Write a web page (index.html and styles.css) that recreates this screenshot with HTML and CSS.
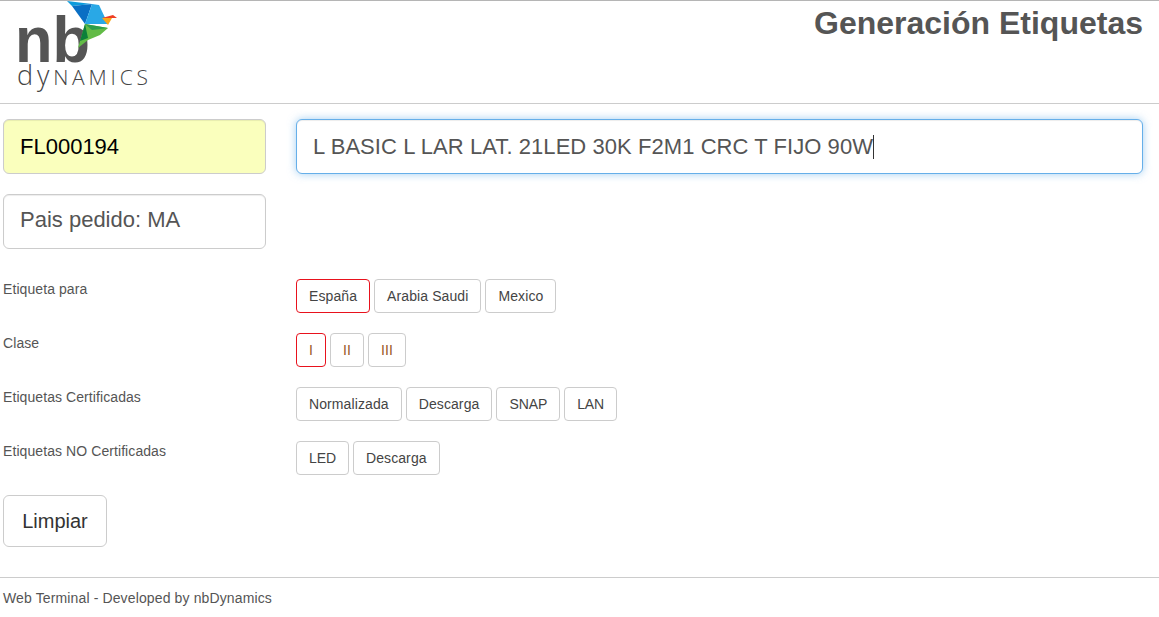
FILE: index.html
```html
<!DOCTYPE html>
<html lang="en">

<head>
  <meta charset="UTF-8" />
  <title>Generación Etiquetas</title>
  <link rel="stylesheet" href="styles.css">
</head>

<body>
  <header class="top">
    <svg class="logo" width="160" height="102" viewBox="0 1 160 102">
      <text class="logo-nb" x="15" y="62" textLength="75" lengthAdjust="spacingAndGlyphs">nb</text>
      <text class="logo-dyn" x="17" y="85" textLength="131"><tspan class="logo-dy">dy</tspan>NAMICS</text>
      <polygon points="67,1 92,4 72,6" fill="#0d9bdc" />
      <polygon points="72,6 92,4 85,24" fill="#0a6fc4" />
      <polygon points="92,4 99,5 108,24 85,24" fill="#29a8e6" />
      <polygon points="85,24 108,28 100,35 88,40 78,48" fill="#62bb46" />
      <polygon points="85,24 108,28 92,30" fill="#2f9e4a" />
      <polygon points="85,24 88,38 80,41 78,48" fill="#0b7f3a" />
      <polygon points="102,18 112,18 108,25" fill="#f9a51a" />
      <polygon points="102,18 113,15 117,18" fill="#ee3e23" />
    </svg>
    <h1 class="title">Generación Etiquetas</h1>
  </header>

  <main class="content">
    <div class="row-inputs">
      <input class="field field-code" type="text" value="FL000194" />
      <div class="field field-desc">L BASIC L LAR LAT. 21LED 30K F2M1 CRC T FIJO 90W<span class="caret"></span></div>
    </div>
    <div class="row-inputs">
      <input class="field field-pais" type="text" value="Pais pedido: MA" />
    </div>

    <div class="options">
      <div class="opt-label">Etiqueta para</div>
      <div class="opt-btns">
        <a class="btn on" href="#">España</a>
        <a class="btn" href="#">Arabia Saudi</a>
        <a class="btn" href="#">Mexico</a>
      </div>

      <div class="opt-label">Clase</div>
      <div class="opt-btns">
        <a class="btn warm on" href="#">I</a>
        <a class="btn warm" href="#">II</a>
        <a class="btn warm" href="#">III</a>
      </div>

      <div class="opt-label">Etiquetas Certificadas</div>
      <div class="opt-btns">
        <a class="btn" href="#">Normalizada</a>
        <a class="btn" href="#">Descarga</a>
        <a class="btn caps" href="#">SNAP</a>
        <a class="btn caps" href="#">LAN</a>
      </div>

      <div class="opt-label">Etiquetas NO Certificadas</div>
      <div class="opt-btns">
        <a class="btn caps" href="#">LED</a>
        <a class="btn" href="#">Descarga</a>
      </div>
    </div>

    <a class="btn btn-lg" href="#">Limpiar</a>
  </main>

  <footer class="bottom">Web Terminal - Developed by nbDynamics</footer>
</body>

</html>
```

FILE: styles.css
```css
html, body, div, h1 {
  padding: 0;
  margin: 0;
}
body {
  font-family: "Liberation Sans", Arial, sans-serif;
  font-size: 14px;
  color: #555;
  background-color: #fff;
  border-top: 1px solid #b5b5b5;
}
a {
  color: inherit;
  text-decoration: none;
}

.top {
  display: flex;
  justify-content: space-between;
  height: 102px;
  padding-right: 16px;
  border-bottom: 1px solid #ccc;
}
.logo {
  display: block;
}
.logo-nb {
  font-size: 65px;
  font-weight: bold;
  fill: #555;
}
.logo-dyn {
  font-family: "Open Sans", sans-serif;
  font-size: 21px;
  font-weight: 300;
  fill: #444;
}
.logo-dy {
  font-size: 27px;
}
.title {
  font-size: 32px;
  line-height: 34px;
  font-weight: bold;
  color: #555;
  padding-top: 5px;
}

.content {
  padding: 15px 16px 30px 3px;
  border-bottom: 1px solid #ccc;
}
.row-inputs {
  display: flex;
  gap: 30px;
  margin-bottom: 20px;
}
.field {
  display: block;
  box-sizing: border-box;
  height: 55px;
  padding: 0 16px;
  font-family: inherit;
  font-size: 22px;
  color: #555;
  background-color: #fff;
  border: 1px solid #ccc;
  border-radius: 6px;
  outline: none;
  box-shadow: inset 0 1px 1px rgba(0,0,0,.075);
}
.field-code {
  width: 263px;
  color: #000;
  background-color: #faffbd;
}
.field-pais {
  width: 263px;
  padding-bottom: 4px;
}
.field-desc {
  flex: 1;
  display: flex;
  align-items: center;
  letter-spacing: .06px;
  border-color: #66afe9;
  box-shadow: inset 0 1px 1px rgba(0,0,0,.075), 0 0 8px rgba(102,175,233,.6);
}
.caret {
  width: 1px;
  height: 24px;
  background-color: #333;
}

.options {
  display: grid;
  grid-template-columns: 293px 1fr;
  row-gap: 20px;
  margin-top: 30px;
}
.opt-label {
  font-size: 14px;
  letter-spacing: .08px;
  line-height: 20px;
}
.opt-btns {
  display: flex;
  gap: 4px;
}
.btn {
  box-sizing: border-box;
  height: 34px;
  padding: 0 12px;
  line-height: 32px;
  font-size: 14px;
  letter-spacing: .1px;
  color: #444;
  background-color: #fff;
  border: 1px solid #ccc;
  border-radius: 4px;
}
.btn.caps {
  letter-spacing: -.1px;
}
.btn.warm {
  color: #9a5a28;
}
.btn.on {
  border-color: #e8121d;
}
.btn-lg {
  display: block;
  width: 104px;
  height: 52px;
  margin-top: 20px;
  padding: 0;
  line-height: 50px;
  text-align: center;
  font-size: 20px;
  letter-spacing: 0;
  color: #333;
  border-radius: 6px;
}

.bottom {
  padding: 12px 3px 0;
  font-size: 14px;
  letter-spacing: .13px;
  line-height: 16px;
}
```
